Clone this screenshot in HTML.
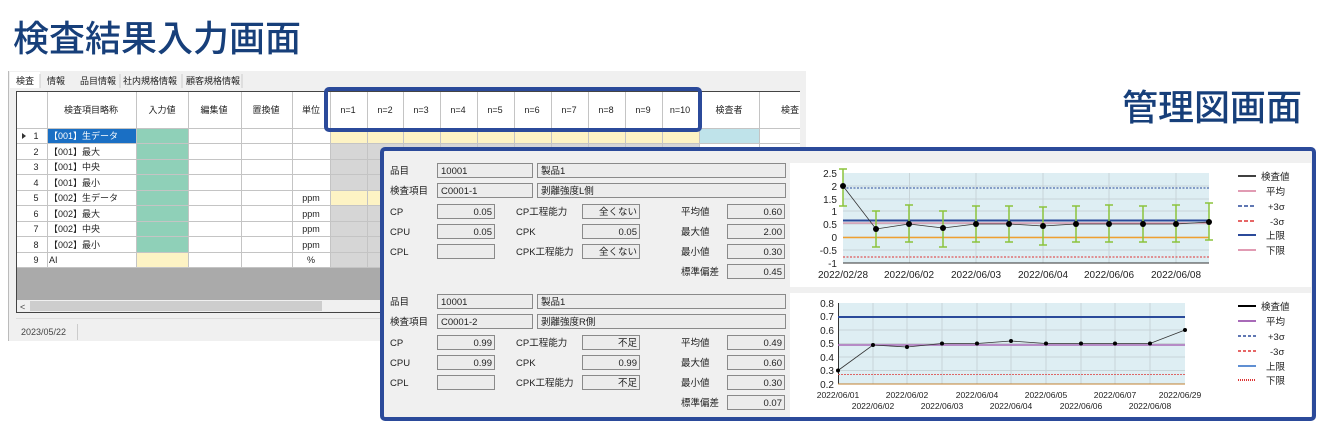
<!DOCTYPE html>
<html><head><meta charset="utf-8"><style>
html,body{margin:0;padding:0;background:#fff;width:1326px;height:438px;overflow:hidden}
svg{display:block}
text{font-family:"Liberation Sans","Noto Sans CJK JP",sans-serif}
</style></head><body>
<svg width="1326" height="438" viewBox="0 0 1326 438" xmlns="http://www.w3.org/2000/svg">
<text x="13" y="51" font-size="36" fill="#173f7a" style="font-family:'Noto Sans CJK JP',sans-serif;font-weight:500">検査結果入力画面</text>
<text x="1122" y="120" font-size="36" fill="#173f7a" style="font-family:'Noto Sans CJK JP',sans-serif;font-weight:500">管理図画面</text>

<!-- left window -->
<rect x="8" y="71" width="798" height="270" fill="#f0f0f0"/>
<line x1="8.5" y1="71" x2="8.5" y2="341" stroke="#bbb"/>
<g font-size="9" fill="#222">
<rect x="10" y="72" width="30" height="16" fill="#fff"/>
<text x="16" y="84">検査</text><text x="47" y="84">情報</text><text x="80" y="84">品目情報</text><text x="123" y="84">社内規格情報</text><text x="186" y="84">顧客規格情報</text>
<line x1="40" y1="74" x2="40" y2="88" stroke="#ccc"/><line x1="120" y1="74" x2="120" y2="88" stroke="#ccc"/><line x1="182" y1="74" x2="182" y2="88" stroke="#ccc"/><line x1="242" y1="74" x2="242" y2="88" stroke="#ccc"/>
</g>
<rect x="16" y="91" width="784" height="222" fill="#aaa"/>
<line x1="16" y1="91.5" x2="800" y2="91.5" stroke="#444"/>
<line x1="16.5" y1="91" x2="16.5" y2="313" stroke="#444"/>
<line x1="16" y1="312.5" x2="800" y2="312.5" stroke="#444"/>
<rect x="17" y="92" width="783" height="36" fill="#fff"/>
<g id="rows">
<rect x="17" y="128" width="783" height="140" fill="#fff"/>
<rect x="47" y="128" width="89" height="15.5" fill="#1a6fc4"/>
<rect x="136" y="128" width="52" height="124" fill="#8fd0b8"/>
<rect x="136" y="252" width="52" height="16" fill="#fdf3c4"/>
<rect x="330" y="128" width="369" height="15.5" fill="#fdf3c4"/>
<rect x="330" y="143.5" width="369" height="46.5" fill="#d6d6d6"/>
<rect x="330" y="190" width="369" height="15.5" fill="#fdf3c4"/>
<rect x="330" y="205.5" width="369" height="62.5" fill="#d6d6d6"/>
<rect x="699" y="128" width="60" height="15.5" fill="#bfe3ea"/>
</g>
<g stroke="#c4c4c4" stroke-width="1">
<path d="M47.5 92V268M136.5 92V268M188.5 92V268M241.5 92V268M292.5 92V268M330.5 92V268M367.5 92V268M403.5 92V268M440.5 92V268M477.5 92V268M514.5 92V268M551.5 92V268M588.5 92V268M625.5 92V268M662.5 92V268M699.5 92V268M759.5 92V268"/>
<path d="M17 128.5H800M17 143.5H800M17 159.5H800M17 174.5H800M17 190.5H800M17 205.5H800M17 221.5H800M17 236.5H800M17 252.5H800M17 267.5H800"/>
</g>
<g font-size="9" fill="#222" text-anchor="middle">
<text x="91" y="113">検査項目略称</text><text x="162" y="113">入力値</text><text x="214" y="113">編集値</text><text x="266" y="113">置換値</text><text x="311" y="113">単位</text>
<text x="348" y="113">n=1</text><text x="385" y="113">n=2</text><text x="421" y="113">n=3</text><text x="458" y="113">n=4</text><text x="495" y="113">n=5</text><text x="532" y="113">n=6</text><text x="569" y="113">n=7</text><text x="606" y="113">n=8</text><text x="643" y="113">n=9</text><text x="680" y="113">n=10</text><text x="729" y="113">検査者</text><text x="790" y="113">検査</text>
<text x="36" y="139">1</text><text x="36" y="155">2</text><text x="36" y="170">3</text><text x="36" y="186">4</text><text x="36" y="201">5</text><text x="36" y="217">6</text><text x="36" y="232">7</text><text x="36" y="248">8</text><text x="36" y="263">9</text>
<text x="311" y="201">ppm</text><text x="311" y="217">ppm</text><text x="311" y="232">ppm</text><text x="311" y="248">ppm</text><text x="311" y="263">%</text>
</g>
<path d="M22 133l4 3-4 3z" fill="#333"/>
<g font-size="9" fill="#222">
<text x="49" y="139" fill="#fff">【001】生データ</text><text x="49" y="155">【001】最大</text><text x="49" y="170">【001】中央</text><text x="49" y="186">【001】最小</text><text x="49" y="201">【002】生データ</text><text x="49" y="217">【002】最大</text><text x="49" y="232">【002】中央</text><text x="49" y="248">【002】最小</text><text x="49" y="263">AI</text>
</g>
<rect x="17" y="300" width="783" height="12" fill="#f0f0f0"/>
<rect x="30" y="301" width="292" height="10" fill="#cdcdcd"/>
<text x="20" y="310" font-size="9" fill="#444">&lt;</text>
<line x1="16" y1="318.5" x2="806" y2="318.5" stroke="#ddd"/>
<text x="21" y="335" font-size="9" fill="#444">2023/05/22</text>
<line x1="77.5" y1="324" x2="77.5" y2="340" stroke="#ccc"/>
<rect x="326" y="89" width="374" height="41" rx="3" fill="none" stroke="#2b4a9a" stroke-width="4"/>

<!-- bottom frame -->
<rect x="382" y="149" width="932" height="270" fill="#f0f0f0"/>
<rect x="790" y="163" width="521" height="124" fill="#fff"/>
<rect x="790" y="293" width="521" height="124" fill="#fff"/>
<g font-size="9.5" fill="#222">
<g fill="#ececec" stroke="#8a8a8a" stroke-width="1">
<rect x="437.5" y="163.5" width="95" height="14"/><rect x="537.5" y="163.5" width="248" height="14"/>
<rect x="437.5" y="183.5" width="95" height="14"/><rect x="537.5" y="183.5" width="248" height="14"/>
<rect x="437.5" y="204.5" width="57" height="14"/><rect x="582.5" y="204.5" width="57" height="14"/><rect x="727.5" y="204.5" width="57" height="14"/>
<rect x="437.5" y="224.5" width="57" height="14"/><rect x="582.5" y="224.5" width="57" height="14"/><rect x="727.5" y="224.5" width="57" height="14"/>
<rect x="437.5" y="244.5" width="57" height="14"/><rect x="582.5" y="244.5" width="57" height="14"/><rect x="727.5" y="244.5" width="57" height="14"/>
<rect x="727.5" y="264.5" width="57" height="14"/>
<rect x="437.5" y="294.5" width="95" height="14"/><rect x="537.5" y="294.5" width="248" height="14"/>
<rect x="437.5" y="314.5" width="95" height="14"/><rect x="537.5" y="314.5" width="248" height="14"/>
<rect x="437.5" y="335.5" width="57" height="14"/><rect x="582.5" y="335.5" width="57" height="14"/><rect x="727.5" y="335.5" width="57" height="14"/>
<rect x="437.5" y="355.5" width="57" height="14"/><rect x="582.5" y="355.5" width="57" height="14"/><rect x="727.5" y="355.5" width="57" height="14"/>
<rect x="437.5" y="375.5" width="57" height="14"/><rect x="582.5" y="375.5" width="57" height="14"/><rect x="727.5" y="375.5" width="57" height="14"/>
<rect x="727.5" y="395.5" width="57" height="14"/>
</g>
<text x="390" y="174">品目</text><text x="441" y="174">10001</text><text x="541" y="174">製品1</text>
<text x="390" y="194">検査項目</text><text x="441" y="194">C0001-1</text><text x="541" y="194">剥離強度L側</text>
<text x="390" y="215">CP</text><text x="516" y="215">CP工程能力</text><text x="681" y="215">平均値</text>
<text x="390" y="235">CPU</text><text x="516" y="235">CPK</text><text x="681" y="235">最大値</text>
<text x="390" y="255">CPL</text><text x="516" y="255">CPK工程能力</text><text x="681" y="255">最小値</text>
<text x="681" y="275">標準偏差</text>
<text x="390" y="305">品目</text><text x="441" y="305">10001</text><text x="541" y="305">製品1</text>
<text x="390" y="325">検査項目</text><text x="441" y="325">C0001-2</text><text x="541" y="325">剥離強度R側</text>
<text x="390" y="346">CP</text><text x="516" y="346">CP工程能力</text><text x="681" y="346">平均値</text>
<text x="390" y="366">CPU</text><text x="516" y="366">CPK</text><text x="681" y="366">最大値</text>
<text x="390" y="386">CPL</text><text x="516" y="386">CPK工程能力</text><text x="681" y="386">最小値</text>
<text x="681" y="406">標準偏差</text>
<g text-anchor="end">
<text x="492" y="215">0.05</text><text x="637" y="215">全くない</text><text x="782" y="215">0.60</text>
<text x="492" y="235">0.05</text><text x="637" y="235">0.05</text><text x="782" y="235">2.00</text>
<text x="637" y="255">全くない</text><text x="782" y="255">0.30</text><text x="782" y="275">0.45</text>
<text x="492" y="346">0.99</text><text x="637" y="346">不足</text><text x="782" y="346">0.49</text>
<text x="492" y="366">0.99</text><text x="637" y="366">0.99</text><text x="782" y="366">0.60</text>
<text x="637" y="386">不足</text><text x="782" y="386">0.30</text><text x="782" y="406">0.07</text>
</g>
</g>

<!-- top chart -->
<rect x="843" y="173" width="366" height="90" fill="#deeef3"/>
<g stroke="#c8d4d8" stroke-width="1">
<path d="M843 186H1209M843 199H1209M843 211H1209M843 224H1209M843 237H1209M843 250H1209M909.5 173V263M976 173V263M1043 173V263M1109 173V263M1176 173V263"/>
</g>
<line x1="843" y1="263" x2="1209" y2="263" stroke="#333"/>
<line x1="843" y1="188" x2="1209" y2="188" stroke="#2b4a9a" stroke-dasharray="2 1.5"/>
<line x1="843" y1="257" x2="1209" y2="257" stroke="#d33" stroke-dasharray="2 1.5"/>
<line x1="843" y1="220.5" x2="1209" y2="220.5" stroke="#2b4a9a" stroke-width="2"/>
<line x1="843" y1="223" x2="1209" y2="223" stroke="#d77a9a"/>
<line x1="843" y1="237.5" x2="1209" y2="237.5" stroke="#f0a030" stroke-width="1.5"/>
<g stroke="#8cc43c" stroke-width="1.5" fill="none">
<path d="M843 169V206M839 169H847M839 206H847"/>
<path d="M876 211V247M872 211H880M872 247H880M909 205V242M905 205H913M905 242H913M943 211V247M939 211H947M939 247H947M976 206V242M972 206H980M972 242H980M1009 206V242M1005 206H1013M1005 242H1013M1043 207V245M1039 207H1047M1039 245H1047M1076 206V242M1072 206H1080M1072 242H1080M1109 205V242M1105 205H1113M1105 242H1113M1143 206V242M1139 206H1147M1139 242H1147M1176 205V242M1172 205H1180M1172 242H1180M1209 203V240M1205 203H1213M1205 240H1213"/>
</g>
<polyline points="843,186 876,229 909,224 943,228 976,224 1009,224 1043,226 1076,224 1109,224 1143,224 1176,224 1209,222" fill="none" stroke="#333" stroke-width="0.8"/>
<g fill="#000"><circle cx="843" cy="186" r="3"/><circle cx="876" cy="229" r="3"/><circle cx="909" cy="224" r="3"/><circle cx="943" cy="228" r="3"/><circle cx="976" cy="224" r="3"/><circle cx="1009" cy="224" r="3"/><circle cx="1043" cy="226" r="3"/><circle cx="1076" cy="224" r="3"/><circle cx="1109" cy="224" r="3"/><circle cx="1143" cy="224" r="3"/><circle cx="1176" cy="224" r="3"/><circle cx="1209" cy="222" r="3"/></g>
<g font-size="10" fill="#222" text-anchor="end">
<text x="837" y="177">2.5</text><text x="837" y="190">2</text><text x="837" y="203">1.5</text><text x="837" y="215">1</text><text x="837" y="228">0.5</text><text x="837" y="241">0</text><text x="837" y="254">-0.5</text><text x="837" y="267">-1</text>
</g>
<g font-size="10" fill="#222" text-anchor="middle">
<text x="843" y="278">2022/02/28</text><text x="909" y="278">2022/06/02</text><text x="976" y="278">2022/06/03</text><text x="1043" y="278">2022/06/04</text><text x="1109" y="278">2022/06/06</text><text x="1176" y="278">2022/06/08</text>
</g>
<g stroke-width="1.5">
<line x1="1238" y1="176" x2="1256" y2="176" stroke="#000"/>
<line x1="1238" y1="191" x2="1256" y2="191" stroke="#d77a9a"/>
<line x1="1238" y1="206" x2="1256" y2="206" stroke="#2b4a9a" stroke-dasharray="4 2"/>
<line x1="1238" y1="221" x2="1256" y2="221" stroke="#d33" stroke-dasharray="4 2"/>
<line x1="1238" y1="235" x2="1256" y2="235" stroke="#2b4a9a" stroke-width="2"/>
<line x1="1238" y1="250" x2="1256" y2="250" stroke="#d77a9a"/>
<line x1="1238" y1="306" x2="1256" y2="306" stroke="#000" stroke-width="2"/>
<line x1="1238" y1="321" x2="1256" y2="321" stroke="#a86ab8" stroke-width="2"/>
<line x1="1238" y1="336" x2="1256" y2="336" stroke="#2b4a9a" stroke-dasharray="3 2"/>
<line x1="1238" y1="351" x2="1256" y2="351" stroke="#d33" stroke-dasharray="3 2"/>
<line x1="1238" y1="366" x2="1256" y2="366" stroke="#2b6ac4"/>
<line x1="1238" y1="380" x2="1256" y2="380" stroke="#d33" stroke-width="2" stroke-dasharray="1 1"/>
</g>
<g font-size="9.5" fill="#222">
<text x="1261" y="180">検査値</text><text x="1266" y="195">平均</text><text x="1268" y="210">+3σ</text><text x="1270" y="225">-3σ</text><text x="1266" y="239">上限</text><text x="1266" y="254">下限</text>
<text x="1261" y="310">検査値</text><text x="1266" y="325">平均</text><text x="1268" y="340">+3σ</text><text x="1270" y="355">-3σ</text><text x="1266" y="370">上限</text><text x="1266" y="384">下限</text>
</g>

<!-- bottom chart -->
<rect x="838" y="303" width="347" height="81" fill="#deeef3"/>
<g stroke="#c8d4d8" stroke-width="1">
<path d="M838 316.5H1185M838 330H1185M838 343.5H1185M838 357H1185M838 370.5H1185M873 303V384M907 303V384M942 303V384M977 303V384M1011 303V384M1046 303V384M1081 303V384M1115 303V384M1150 303V384"/>
</g>
<line x1="838.5" y1="303" x2="838.5" y2="384" stroke="#333"/>
<line x1="838" y1="384" x2="1185" y2="384" stroke="#c08030"/>
<line x1="838" y1="317" x2="1185" y2="317" stroke="#2b4a9a" stroke-width="2"/>
<line x1="838" y1="345" x2="1185" y2="345" stroke="#a86ab8" stroke-width="1.5"/>
<line x1="838" y1="374.5" x2="1185" y2="374.5" stroke="#d66" stroke-dasharray="2 1"/>
<polyline points="838,370.5 873,345 907,347 942,343.5 977,343.5 1011,341 1046,343.5 1081,343.5 1115,343.5 1150,343.5 1185,330" fill="none" stroke="#333" stroke-width="0.8"/>
<g fill="#000"><circle cx="838" cy="370.5" r="2"/><circle cx="873" cy="345" r="2"/><circle cx="907" cy="347" r="2"/><circle cx="942" cy="343.5" r="2"/><circle cx="977" cy="343.5" r="2"/><circle cx="1011" cy="341" r="2"/><circle cx="1046" cy="343.5" r="2"/><circle cx="1081" cy="343.5" r="2"/><circle cx="1115" cy="343.5" r="2"/><circle cx="1150" cy="343.5" r="2"/><circle cx="1185" cy="330" r="2"/></g>
<g font-size="10" fill="#222" text-anchor="end">
<text x="834" y="307">0.8</text><text x="834" y="320">0.7</text><text x="834" y="334">0.6</text><text x="834" y="347">0.5</text><text x="834" y="361">0.4</text><text x="834" y="374">0.3</text><text x="834" y="388">0.2</text>
</g>
<g font-size="8.5" fill="#222" text-anchor="middle">
<text x="838" y="398">2022/06/01</text><text x="907" y="398">2022/06/02</text><text x="977" y="398">2022/06/04</text><text x="1046" y="398">2022/06/05</text><text x="1115" y="398">2022/06/07</text><text x="1180" y="398">2022/06/29</text>
<text x="873" y="409">2022/06/02</text><text x="942" y="409">2022/06/03</text><text x="1011" y="409">2022/06/04</text><text x="1081" y="409">2022/06/06</text><text x="1150" y="409">2022/06/08</text>
</g>
<rect x="382" y="149" width="932" height="270" rx="3" fill="none" stroke="#2b4a9a" stroke-width="4"/>
</svg>
</body></html>
